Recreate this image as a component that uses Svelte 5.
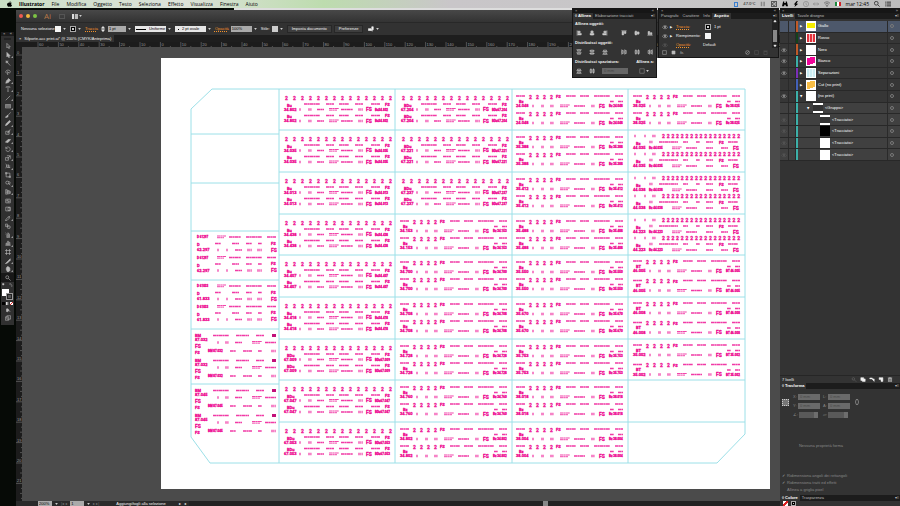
<script lang="ts">
  type Label = { x: number; y: number; t: string; size: number };
  type Line = { x1: number; x2: number; y: number; w: number; o: number };

  const menus = ['File', 'Modifica', 'Oggetto', 'Testo', 'Seleziona', 'Effetto', 'Visualizza', 'Finestra', 'Aiuto'];

  // tool glyphs, 16x16 box
  const tools: { name: string; d: string; fill?: boolean; sub?: boolean }[] = [
    { name: 'Selezione', d: 'M5 1v12l3-3 2 5 2-1-2-4h4z' },
    { name: 'Selezione diretta', d: 'M5 1v12l3-3 2 5 2-1-2-4h4z', fill: true, sub: true },
    { name: 'Bacchetta magica', d: 'M7 7l7 8M5 1v8M1 5h8M2 2l6 6M8 2L2 8' },
    { name: 'Lazo', d: 'M6 12C0 10 1 3 8 3s8 6 3 8l-4-4v8l2-2' },
    { name: 'Penna', d: 'M2 14l2-7 6-5 4 4-5 6zM9 1l6 6', fill: true, sub: true },
    { name: 'Testo', d: 'M3 5V2h10v3M8 2v12M6 14h4', sub: true },
    { name: 'Linea', d: 'M2 14L14 2', sub: true },
    { name: 'Rettangolo', d: 'M1 4h14v9H1zM2 7h12M2 10h12', sub: true },
    { name: 'Pennello', d: 'M15 1L7 10M8 9c-3-1-3 3-7 5 4 1 8 0 7-5', fill: true },
    { name: 'Matita', d: 'M1 15l2-5L12 1l3 3-9 9z', fill: true, sub: true },
    { name: 'Pennello blob', d: 'M2 6h9v8H2zM6 10l8-9M13 4l-5 7', sub: true },
    { name: 'Gomma', d: 'M1 11l7-7h7l-7 8z', fill: true, sub: true },
    { name: 'Rotazione', d: 'M3 5a6 6 0 1 1-1 5M2 2v5h5', sub: true },
    { name: 'Scala', d: 'M1 7h8v7H1zM5 2h9v8M14 2L7 9', sub: true },
    { name: 'Larghezza', d: 'M2 2c4 3 2 9 0 12M3 8h11M8 3l3 10M5 12h9', sub: true },
    { name: 'Trasformazione libera', d: 'M3 3h10v10H3zM1 1h4v4H1zM11 11h4v4h-4z' },
    { name: 'Crea forme', d: 'M6 3a4 4 0 1 1 0 8 4 4 0 0 1 0-8M9 8l5 6M9 4c6-1 6 7 1 7', sub: true },
    { name: 'Griglia prospettica', d: 'M2 1v13l12-2V6zM2 5l12 3M2 10h12M7 3v10', sub: true },
    { name: 'Trama', d: 'M2 3h12v10H2zM2 8c4-3 8 3 12 0M8 3c-3 4 3 6 0 10' },
    { name: 'Sfumatura', d: 'M2 3h12v10H2zM8 4h5v8H8z' },
    { name: 'Contagocce', d: 'M1 15l2-4 6-6 3 3-6 6zM9 3l4 4M11 5l3-3', sub: true },
    { name: 'Fusione', d: 'M1 3h6v6H1zM10 7a4 4 0 1 1 0 8 4 4 0 0 1 0-8M5 6l6 6' },
    { name: 'Spruzza simboli', d: 'M5 6h7v9H5zM6 3h4v3M1 2h1M3 4h1M1 6h1M7 9h3v3H7z', sub: true },
    { name: 'Grafico', d: 'M1 14h14M3 14V8h2v6M7 14V3h2v11M11 14V6h2v8', sub: true },
    { name: 'Tavola disegno', d: 'M4 0v16M12 0v16M0 4h16M0 12h16' },
    { name: 'Sezione', d: 'M1 15l7-7 6-6v4l-7 7z', fill: true, sub: true },
    { name: 'Mano', d: 'M3 8l2-5 2-2 2 1 2 1 2 3v6l-3 3H6z', fill: true, sub: true },
    { name: 'Zoom', d: 'M6 2a4 4 0 1 1 0 8 4 4 0 0 1 0-8M9 9l6 6' }
  ];

  const layers = [
    { name: 'Giallo', color: '#c05a28', thumb: 'yellow', eye: false, selected: true },
    { name: 'Rosso', color: '#12431b', thumb: 'red', eye: false },
    { name: 'Nero', color: '#c05a28', thumb: 'dots', eye: true },
    { name: 'Bianco', color: '#3cb0a8', thumb: 'magenta', eye: true },
    { name: 'Separazioni', color: '#7a2fb8', thumb: 'cyan', eye: true },
    { name: 'Cut (no print)', color: '#4361b8', thumb: 'orange', eye: false },
    { name: '(no print)', color: '#3cb0a8', thumb: 'white', eye: true, open: true },
    { name: '<Gruppo>', color: '#3cb0a8', thumb: 'band', depth: 1, open: true },
    { name: '<Tracciato>', color: '#3cb0a8', thumb: 'band', depth: 2 },
    { name: '<Tracciato>', color: '#3cb0a8', thumb: 'black', depth: 2 },
    { name: '<Tracciato>', color: '#3cb0a8', thumb: 'white', depth: 2 },
    { name: '<Tracciato>', color: '#3cb0a8', thumb: 'white', depth: 2 }
  ];

  const alignH = ['M3 1v14M5 3h6v4H5zM5 9h9v4H5z', 'M8 1v14M5 3h6v4H5zM3 9h10v4H3z', 'M13 1v14M5 3h6v4H5zM2 9h9v4H2z'];
  const alignV = ['M1 2h14M3 4h4v9H3zM9 4h4v5H9z', 'M1 8h14M3 3h4v10H3zM9 5h4v6H9z', 'M1 14h14M3 4h4v8H3zM9 7h4v5H9z'];
  const distH = ['M1 2h14M4 3h8v3H4zM1 10h14M4 11h8v3H4z', 'M1 5h14M4 3h8v4H4zM1 12h14M4 10h8v4H4z', 'M1 7h14M4 3h8v3H4zM1 14h14M4 10h8v3H4z'];
  const distV = ['M2 1v14M3 4h3v8H3zM10 1v14M11 4h3v8h-3z', 'M5 1v14M3 4h4v8H3zM12 1v14M10 4h4v8h-4z', 'M7 1v14M3 4h3v8H3zM14 1v14M10 4h3v8h-3z'];

  const hTicks = Array.from({ length: 37 }, (_, i) => ({ x: 22 + i * 20.4, n: Math.abs(i - 6) * 10 }));
  const vTicks = Array.from({ length: 22 }, (_, i) => ({ y: 8 + i * 20.4, n: i }));

  const labels: Label[] = [];
  const lines: Line[] = [];
  const boxes: { x: number; y: number }[] = [];

  const put = (x: number, y: number, t: string, size = 4) => labels.push({ x, y: y + size * 0.36, t, size });
  const micro = (y: number, ...spans: number[][]) =>
    spans.forEach(([a, b]) => lines.push({ x1: a, x2: b, y, w: 1.4, o: 0.8 }));
  const mark = (y: number, ...spans: number[][]) =>
    spans.forEach(([a, b]) => lines.push({ x1: a, x2: b, y, w: 2.6, o: 0.5 }));
  const pair = (x: number, y: number, a: number, b: number) =>
    lines.push({ x1: x + a, x2: x + b, y: y - 1, w: 1.2, o: 0.75 }, { x1: x + a, x2: x + b - 2, y: y + 0.6, w: 1.2, o: 0.6 });
  const shift = (x: number, spans: number[][]) => spans.map(([a, b]) => [a + x, b + x]);

  // fourteen class numerals over two vehicle strips
  function stripLong(x: number, y: number, cls: string, num: string) {
    for (let i = 0; i < 14; i++) put(x + 6 + i * 8, y + 9, '2', 5);
    for (const dy of [0, 11.5]) {
      const t = y + dy;
      micro(t + 15, ...shift(x, [[25, 41], [47, 55], [60, 70], [76, 84], [92, 101]]));
      put(x + 106, t + 15.5, 'FS', 4);
      put(x + 8, t + 16.5, cls, 4);
      put(x + 5, t + 20.5, num, 4);
      mark(t + 20.5, ...shift(x, [[20, 22], [29, 33]]));
      micro(t + 20.5, ...shift(x, [[38, 45], [62, 74]]));
      pair(x, t + 20.5, 50, 60);
      mark(t + 20.5, ...shift(x, [[79, 84]]));
      put(x + 87, t + 20.5, 'FS', 5);
      put(x + 96, t + 20.5, cls + num, 3);
    }
  }

  // four numerals plus FS on the top line
  function stripShort(x: number, y: number, cls: string, num: string, step = 17) {
    for (const dy of [0, step]) {
      const t = y + dy;
      micro(t + 7, ...shift(x, [[5, 14], [55, 65], [69, 78], [83, 99], [104, 112]]));
      for (let i = 0; i < 4; i++) put(x + 18 + i * 7, t + 8, '2', 5);
      put(x + 45, t + 8, 'FS', 4);
      put(x + 8, t + 12.5, cls, 4);
      put(x + 5, t + 17, num, 4);
      micro(t + 12.5, ...shift(x, [[99, 103], [107, 112]]));
      mark(t + 17, ...shift(x, [[21, 23], [30, 33], [39, 43], [80, 84]]));
      pair(x, t + 17, 49, 59);
      micro(t + 17, ...shift(x, [[63, 74]]));
      put(x + 88, t + 17, 'FS', 5);
      put(x + 98, t + 17, cls + ' ' + num, 3);
    }
  }

  function stripDense(x: number, y: number, cls: string, num: string) {
    for (const dy of [0, 18]) {
      const t = y + dy;
      mark(t + 6, ...shift(x, [[6, 8], [16, 18], [24, 28]]));
      for (let i = 0; i < 17; i++) put(x + 34 + i * 4.7, t + 6, '2', 5);
      micro(t + 12, ...shift(x, [[31, 50], [55, 60], [68, 72], [78, 85], [100, 110]]));
      mark(t + 12, ...shift(x, [[21, 25]]));
      put(x + 91, t + 12.5, 'FS', 4);
      put(x + 8, t + 13.5, cls, 4);
      put(x + 5, t + 18, num, 4);
      put(x + 21, t + 18, cls + ' ' + num, 3);
      pair(x, t + 18, 44, 54);
      micro(t + 18, ...shift(x, [[58, 69], [78, 85], [93, 100]]));
      put(x + 105, t + 18, 'FS', 5);
    }
  }

  function blockD(y: number, top: string, num: string) {
    for (const dy of [0, 20.5]) {
      const t = y + dy;
      put(36, t + 6, 'D ' + top, 3);
      pair(0, t + 6, 56, 65);
      micro(t + 6, [68, 80], [85, 101], [106, 115]);
      micro(t + 12.5, [54, 60], [71, 78], [85, 91], [97, 101]);
      put(110, t + 12.5, 'FS', 4);
      put(36, t + 14, 'D', 4);
      put(36, t + 19, num, 4);
      mark(t + 19, [56, 58], [65, 67], [86, 91], [96, 101]);
      micro(t + 19, [74, 81]);
      put(110, t + 19, 'FS', 5);
    }
  }

  function blockBM(y: number, num: string) {
    for (const dy of [0, 25]) {
      const t = y + dy;
      put(34, t + 6.5, 'BM', 4);
      micro(t + 6.5, [52, 68], [75, 88], [95, 103]);
      boxes.push({ x: 111, y: t + 5 });
      put(34, t + 11, num, 4);
      mark(t + 13.5, [56, 58], [64, 68]);
      micro(t + 13.5, [74, 81], [104, 115]);
      pair(0, t + 13.5, 91, 101);
      put(34, t + 17.5, 'FS', 5);
      put(34, t + 23.5, 'FS', 4);
      put(47, t + 22, 'BM ' + num, 3);
      micro(t + 22, [69, 75], [82, 91], [97, 101]);
      mark(t + 22, [110, 115]);
    }
  }

  const rowTop = [31, 72, 114, 156, 197, 239, 281, 322, 364];

  ['34.802', '34.035', '34.013', '34.438', '34.407', '34.418'].forEach((n, i) => stripLong(118, rowTop[i], 'Bu', n));
  ['67.009', '67.047', '67.053'].forEach((n, i) => stripLong(118, rowTop[i + 6], 'BDu', n));
  ['67.204', '67.221', '67.237'].forEach((n, i) => stripLong(235, rowTop[i], 'BDu', n));
  ['34.153', '34.700', '34.708', '34.728', '34.760', '34.802'].forEach((n, i) => stripShort(234, rowTop[i + 3], 'Bz', n));
  ['24.048', '35.388', '35.412', '35.488', '35.550', '35.670', '35.753', '38.018', '38.004'].forEach((n, i) =>
    stripShort(350, rowTop[i], 'Bz', n)
  );
  stripShort(467, rowTop[0], 'Bz', '38.025');
  ['44.035', '44.038', '44.223'].forEach((n, i) => stripDense(467, rowTop[i + 1], 'Bz', n));
  ['46.005', '46.008', '35.002'].forEach((n, i) => stripShort(467, rowTop[i + 4] - 1, 'BT', n, 19.5));
  blockD(173, '61297', '62.297');
  blockD(222, '61833', '61.833');
  blockBM(271, '87.032');
  blockBM(326, '87.045');
</script>

{#snippet glyph(d: string, filled = false)}
  <svg class="glyph" viewBox="0 0 16 16" aria-hidden="true">
    <path {d} fill={filled ? 'currentColor' : 'none'} stroke="currentColor" stroke-width="1.6" />
  </svg>
{/snippet}

{#snippet eyeIcon()}
  <svg class="glyph" viewBox="0 0 16 16" aria-hidden="true">
    <path d="M1 9c3-6 11-6 14 0-3 5-11 5-14 0z" fill="none" stroke="currentColor" stroke-width="1.6" />
    <circle cx="8" cy="8" r="2.6" fill="currentColor" />
  </svg>
{/snippet}

{#snippet caret()}
  <svg class="caret" viewBox="0 0 4 3" aria-hidden="true"><path d="M0 0h4L2 3z" fill="currentColor" /></svg>
{/snippet}

<div class="screen">
  <header class="menubar">
    <svg class="apple" viewBox="0 0 16 18" aria-hidden="true">
      <path d="M11 0c0 2-1 4-3 4 0-2 1-4 3-4zM8 5c2 0 5-2 7 1-3 2-2 6 1 7-1 3-3 5-5 5-1 0-2-1-3-1s-2 1-3 1C2 18 0 13 0 10c0-5 5-6 8-5z" />
    </svg>
    <nav>
      <button class="app-name">Illustrator</button>
      {#each menus as m}
        <button>{m}</button>
      {/each}
    </nav>
    <div class="tray">
      <i class="cpu"></i>
      <span class="temp">47.0°C</span>
      <svg class="tray-icon faint" viewBox="0 0 16 16"><path d="M2 2h4v12H2zM9 2h4v12H9z" /></svg>
      <svg class="tray-icon" viewBox="0 0 16 16"><path d="M1 1h14v14H1zM12 6C10 3 4 4 4 8s6 5 8 2" fill="none" stroke="#222" stroke-width="2" /></svg>
      <svg class="tray-icon" viewBox="0 0 16 16"><path d="M3 1h3v4h4V1h3l3 13h-6v-4H6v4H0z" /></svg>
      <svg class="tray-icon" viewBox="0 0 16 16"><path d="M10 0L2 9h4l-2 7 10-9H9l4-7z" /></svg>
      <svg class="tray-icon faint" viewBox="0 0 16 16"><path d="M8 1a7 7 0 1 1 0 14A7 7 0 0 1 8 1M8 4v5l3 2" fill="none" stroke="#222" stroke-width="2" /></svg>
      <svg class="tray-icon faint" viewBox="0 0 16 16"><path d="M0 8h16M5 4L1 8l4 4M11 4l4 4-4 4" fill="none" stroke="#222" stroke-width="2" /></svg>
      <svg class="tray-icon wifi" viewBox="0 0 16 16"><path d="M0 6c5-5 11-5 16 0M3 9c3-3 7-3 10 0M6 12l2 3 2-3c-1-1-3-1-4 0" fill="none" stroke="#222" stroke-width="2" /></svg>
      <i class="flag"></i>
      <span>mar 12:45</span>
      <svg class="tray-icon" viewBox="0 0 16 16"><path d="M6 1a5 5 0 1 1 0 10A5 5 0 0 1 6 1M10 10l5 5" fill="none" stroke="#222" stroke-width="2" /></svg>
      <svg class="tray-icon" viewBox="0 0 16 16"><path d="M0 3h2M4 3h12M0 8h2M4 8h12M0 13h2M4 13h12" stroke="#222" stroke-width="2.4" /></svg>
    </div>
  </header>

  <div class="desktop">
    <aside class="toolbox">
      <div class="grab"><span>×</span><span>«</span></div>
      <div class="grip"></div>
      <div class="tool-list">
        {#each tools as tool}
          <button class:sub={tool.sub} class:active={tool.name === 'Zoom'} aria-label={tool.name}>
            {@render glyph(tool.d, tool.fill)}
          </button>
        {/each}
      </div>
      <div class="swap">{@render glyph('M2 2h6v6H2z', true)}{@render glyph('M2 4c6-2 10 2 9 9M5 1L2 4l3 3M8 11l3 3 3-3')}</div>
      <div class="fill-stroke"><i class="fill"></i><i class="stroke"></i></div>
      <div class="paint"><i class="solid"></i><i class="grad"></i><i class="none"></i></div>
      <div class="mode">{@render glyph('M4 5a4 4 0 1 1 0 7zM8 7l6 6', true)}</div>
      <div class="mode">{@render glyph('M1 5h9v9H1zM5 2h10v9H5z')}</div>
    </aside>

    <main class="window">
      <div class="titlebar">
        <div class="lights"><i class="close"></i><i class="min"></i><i class="max"></i></div>
        <b class="ai">Ai</b>
        <i class="bridge"></i>
        <button class="arrange" aria-label="Disponi documenti"><i></i>{@render caret()}</button>
      </div>

      <div class="controlbar">
        <span class="sel">Nessuna selezione</span>
        <i class="chip"></i>{@render caret()}
        <i class="chip outline"></i>{@render caret()}
        <a class="link" href="#traccia">Traccia</a>
        <span class="stepper">{@render glyph('M4 6l4-5 4 5zM4 10l4 5 4-5z', true)}</span>
        <select class="field pt" aria-label="Traccia"><option>1 pt</option></select>
        {@render caret()}
        <div class="field profile"><i></i><select aria-label="Profilo"><option>Uniforme</option></select></div>
        {@render caret()}
        <div class="field brush"><i></i><select aria-label="Pennello"><option>2 pt ovale</option></select></div>
        {@render caret()}
        <a class="link" href="#opacita">Opacità</a>
        <input class="field opacity" aria-label="Opacità" value="100%" />
        {@render caret()}
        <span>Stile:</span>
        <i class="chip grey"></i>{@render caret()}
        <button>Imposta documento</button>
        <button>Preferenze</button>
        <span class="select-like">{@render glyph('M1 7h7v5H1zM10 2l4 0v8h-3v4l-3-5h2z', true)}</span>{@render caret()}
      </div>

      <div class="doc-tabs">
        <button><span>×</span> Silporte-acc print.ai* @ 200% (CMYK/Anteprima)</button>
      </div>

      <svg class="ruler-h" aria-hidden="true">
        {#each hTicks as t}
          <path d="M{t.x} 0v6M{t.x + 10} 4v2M{t.x + 5} 5v1M{t.x + 15} 5v1" stroke="#777" stroke-width="0.6" />
          <text x={t.x + 1} y="4">{t.n}</text>
        {/each}
      </svg>

      <div class="stage">
        <svg class="ruler-v" aria-hidden="true">
          {#each vTicks as t}
            <path d="M0 {t.y}h6M4 {t.y + 10}h2M5 {t.y + 5}h1M5 {t.y + 15}h1" stroke="#777" stroke-width="0.6" />
            <text x="1" y={t.y - 1}>{t.n}</text>
          {/each}
        </svg>
        <div class="pasteboard">
          <svg class="artboard" viewBox="0 0 609 431" role="img" aria-label="Tavola disegno">
            <rect width="609" height="431" fill="#fff" />
            <g class="cuts">
              <path d="M30 51L51 31H584V376L556 405H49L30 379z" />
              <path d="M118 31V405M234 31V405M351 31V405M467 31V405" />
              <path d="M30 76H118M30 125H118M30 173H118M30 222H118M30 271H118M30 326H118" />
              {#each rowTop.slice(1) as y}
                <path d="M118 {y}H584" />
              {/each}
            </g>
            {#each lines as l}
              <line x1={l.x1} x2={l.x2} y1={l.y} y2={l.y} stroke-width={l.w} opacity={l.o} />
            {/each}
            {#each boxes as b}
              <rect class="box" x={b.x} y={b.y} width="4" height="3" />
            {/each}
            {#each labels as l}
              <text x={l.x} y={l.y} font-size={l.size}>{l.t}</text>
            {/each}
          </svg>
        </div>
      </div>

      <footer class="status">
        <select class="field zoom" aria-label="Zoom"><option>200%</option></select>
        {@render caret()}
        <span class="nav">|◂ ◂</span>
        <select class="field page" aria-label="Tavola"><option>1</option></select>
        {@render caret()}
        <span class="nav">▸ ▸|</span>
        <span class="hint">Aggiungi/togli alla selezione</span>
        <span>▸</span><span>◂</span>
        <div class="track"><i></i></div>
      </footer>
    </main>

    <aside class="dock">
      <div class="panel-top"><span>×</span><span>»</span></div>
      <div class="tabs">
        <button class="on">Livelli</button><button>Tavole disegno</button><span class="flyout">▾≡</span>
      </div>
      <ul class="layers">
        {#each layers as l}
          <li class:selected={l.selected} class:child={l.depth}>
            <span class="eye" class:dim={l.depth}>{#if l.eye || l.depth === 2}{@render eyeIcon()}{/if}</span>
            <span class="lock"></span>
            <i class="tag" style="background: {l.color}"></i>
            <span class="name depth-{l.depth ?? 0}">
              <span class="arrow">{l.depth === 2 ? '' : l.open ? '▼' : '▶'}</span>
              <i class="thumb {l.thumb}"></i>
              {l.name}
            </span>
            <span class="target"><i></i></span>
          </li>
        {/each}
      </ul>
      <div class="layer-foot">
        <span>7 livelli</span>
        <span class="foot-icons">
          <span class="faint">{@render glyph('M6 2a4 4 0 1 1 0 8 4 4 0 0 1 0-8M9 9l6 6')}</span>
          {@render glyph('M1 2h9v9H1zM6 6h9v8H6z', true)}
          {@render glyph('M1 3h8v3H1zM8 6h7v8z', true)}
          {@render glyph('M2 2h12v12H8V8H2z', true)}
          {@render glyph('M3 5h10v10H3zM1 3h14M6 1h4M6 7v6M10 7v6')}
        </span>
      </div>
      <div class="tabs"><button class="on">◊ Trasforma</button><span class="flyout">▾≡</span></div>
      <div class="transform">
        <div class="numbers">
          <i class="locator"></i>
          <div class="pairs">
            <label>X: <input disabled value="0 mm" /></label>
            <label>L: <input disabled value="0 mm" /></label>
            <label>Y: <input disabled value="0 mm" /></label>
            <label>A: <input disabled value="0 mm" /></label>
            <label>∠: <select disabled><option></option></select></label>
            <label>▱: <select disabled><option></option></select></label>
          </div>
          <span class="chain">{@render glyph('M5 6V4a3 3 0 0 1 6 0v2M5 10v2a3 3 0 0 0 6 0v-2M4 6v4M12 6v4')}</span>
        </div>
        <p>Nessuna proprietà forma</p>
        <div class="checks">
          <label><input type="checkbox" checked disabled /> Ridimensiona angoli dei rettangoli</label>
          <label><input type="checkbox" checked disabled /> Ridimensiona tratti ed effetti</label>
          <label><input type="checkbox" disabled /> Allinea a griglia pixel</label>
        </div>
      </div>
      <div class="tabs"><button class="on">◊ Colore</button><button>Trasparenza</button><span class="flyout">▾≡</span></div>
      <div class="color-row"><i class="none"></i><i class="chip outline"></i></div>
    </aside>

    <section class="floating allinea">
      <div class="panel-top"><span>×</span><span>«</span></div>
      <div class="tabs">
        <button class="on">◊ Allinea</button><button>Elaborazione tracciati</button><span class="flyout">▾≡</span>
      </div>
      <div class="align-body">
        <h4>Allinea oggetti:</h4>
        <div class="icon-row">
          <div>{#each alignH as d}<button aria-label="Allinea">{@render glyph(d, true)}</button>{/each}</div>
          <div>{#each alignV as d}<button aria-label="Allinea">{@render glyph(d, true)}</button>{/each}</div>
        </div>
        <h4>Distribuisci oggetti:</h4>
        <div class="icon-row">
          <div>{#each distH as d}<button aria-label="Distribuisci">{@render glyph(d)}</button>{/each}</div>
          <div>{#each distV as d}<button aria-label="Distribuisci">{@render glyph(d)}</button>{/each}</div>
        </div>
        <h4 class="split"><span>Distribuisci spaziatura:</span><span>Allinea a:</span></h4>
        <div class="icon-row">
          <div>
            <button aria-label="Spazio verticale">{@render glyph(distH[2])}</button>
            <button aria-label="Spazio orizzontale">{@render glyph(distV[1])}</button>
            <input class="space" disabled value="0 mm" aria-label="Spaziatura" />
          </div>
          <button class="align-to" aria-label="Allinea a">{@render glyph('M2 2h12v12H2z')}{@render caret()}</button>
        </div>
      </div>
    </section>

    <section class="floating aspetto">
      <div class="panel-top"><span>×</span><span>«</span></div>
      <div class="tabs">
        <button>Paragrafo</button><button>Carattere</button><button>Info</button><button class="on">Aspetto</button>
        <span class="flyout">▾≡</span>
      </div>
      <div class="aspect-body">
        <div class="attrs">
          <div class="attr">{@render eyeIcon()}<span class="arrow">▶</span><a class="link" href="#traccia">Traccia:</a><i class="chip outline"></i><span class="weight">1 pt</span></div>
          <div class="attr">{@render eyeIcon()}<span class="arrow">▶</span><span>Riempimento:</span><i class="chip"></i></div>
          <div class="attr"><span class="faint">{@render eyeIcon()}</span><span></span><a class="link" href="#opacita">Opacità:</a><span class="val">Default</span></div>
        </div>
        <div class="scroll">{@render glyph('M3 12h10L8 4z', true)}<i></i>{@render glyph('M3 4h10l-5 8z', true)}</div>
      </div>
      <div class="aspect-foot">
        {@render glyph('M2 2h12v12H2z')}{@render glyph('M3 3h10v10H3z', true)}<em>fx.</em>
        <span class="push">{@render glyph('M8 2a6 6 0 1 1 0 12A6 6 0 0 1 8 2M4 12l8-8')}</span>
        <span class="faint">{@render glyph('M2 2h12v12H2z')}</span>
        <span class="faint">{@render glyph('M3 5h10v10H3zM1 3h14')}</span>
      </div>
    </section>
  </div>
</div>

<style>
  :global(body) {
    background: #000;
  }

  .screen {
    display: flex;
    flex-direction: column;
    height: 100vh;
    overflow: hidden;
    font: 4px/6px 'Liberation Sans', Arial, sans-serif;
    color: #f2f2f2;
  }

  .screen :global(*) {
    box-sizing: border-box;
  }

  button,
  input,
  select {
    font: inherit;
    color: inherit;
    background: none;
    border: 0;
    border-radius: 0;
    margin: 0;
    padding: 0;
    appearance: none;
    min-width: 0;
  }

  button {
    display: flex;
    align-items: center;
    justify-content: center;
  }

  i {
    display: block;
    flex: none;
  }

  .glyph {
    width: 6px;
    height: 6px;
    flex: none;
    display: block;
  }

  .caret {
    width: 3px;
    height: 2px;
    flex: none;
    color: #ccc;
  }

  .faint {
    opacity: 0.3;
  }

  .link {
    color: #f7932a;
    text-decoration: underline dotted;
  }

  /* menu bar */
  .menubar {
    display: flex;
    align-items: center;
    height: 8px;
    flex: none;
    padding: 0 9px 0 7px;
    font: 5px/8px 'Open Sans', sans-serif;
    color: #000;
    background: linear-gradient(90deg, #c9dfc5, #dde2da 20%, #bddcae 36%, #c9c6c9 50%, #c6c6c6 80%, #bbb);
  }

  .apple {
    width: 5px;
    height: 6px;
    margin-right: 7px;
  }

  .menubar nav {
    display: flex;
    gap: 7px;
  }

  .menubar .app-name {
    font-weight: 700;
  }

  .tray {
    display: flex;
    align-items: center;
    gap: 5px;
    margin-left: auto;
  }

  .tray-icon {
    width: 6px;
    height: 6px;
  }

  .tray .faint {
    margin-left: -1px;
  }

  .wifi {
    opacity: 0.6;
  }

  .cpu {
    width: 4px;
    height: 5px;
    border: 1px solid #3a7fd0;
  }

  .temp {
    font-size: 4px;
  }

  .flag {
    width: 6px;
    height: 4px;
    background: linear-gradient(90deg, #1d8a3c 33%, #fff 33% 66%, #d2232a 66%);
  }

  .desktop {
    position: relative;
    display: flex;
    flex: 1;
    min-height: 0;
    background: linear-gradient(90deg, #060a06 26%, #ddd 26%);
  }

  /* tools */
  .toolbox {
    align-self: flex-start;
    width: 13px;
    flex: none;
    margin: 24px 2px 0 1px;
    background: #303030;
    color: #bbb;
    padding-bottom: 3px;
  }

  .grab {
    display: flex;
    justify-content: space-between;
    padding: 0 2px;
    height: 4px;
    line-height: 4px;
    background: #1a1a1a;
  }

  .grip {
    height: 2px;
    margin: 2px 3px;
    background: #222;
  }

  .tool-list {
    display: grid;
    grid-auto-rows: 1fr;
    height: 240px;
  }

  .tool-list button {
    position: relative;
  }

  .tool-list .sub::after {
    content: '';
    position: absolute;
    right: 1px;
    bottom: 1px;
    border: 1px solid transparent;
    border-right-color: #999;
    border-bottom-color: #999;
  }

  .tool-list .active {
    background: #181818;
  }

  .swap {
    display: flex;
    justify-content: space-between;
    padding: 1px;
  }

  .swap .glyph {
    width: 4px;
    height: 4px;
  }

  .fill-stroke {
    display: grid;
    padding: 1px;
    height: 13px;
  }

  .fill-stroke i {
    grid-area: 1 / 1;
    width: 7px;
    height: 7px;
  }

  .fill-stroke .fill {
    background: #fff;
  }

  .fill-stroke .stroke {
    justify-self: end;
    align-self: end;
    border: 2px solid #222;
    outline: 1px solid #999;
    outline-offset: -1px;
    background: #555;
  }

  .paint {
    display: flex;
    gap: 1px;
    padding: 1px;
  }

  .paint i {
    width: 3px;
    height: 3px;
  }

  .solid {
    background: #000;
  }

  .grad {
    background: linear-gradient(90deg, #fff, #333);
  }

  .none {
    background: linear-gradient(135deg, #fff 35%, #d22 35% 65%, #fff 65%);
  }

  .mode {
    display: flex;
    justify-content: center;
    padding: 1px 0;
  }

  /* document window */
  .window {
    display: flex;
    flex-direction: column;
    flex: 1;
    min-width: 0;
    margin-top: 2px;
    background: #323232;
  }

  .titlebar {
    display: flex;
    align-items: center;
    height: 12px;
    flex: none;
    padding: 0 3px;
    background: linear-gradient(#484848, #333);
  }

  .lights {
    display: flex;
    gap: 3px;
    margin-right: 7px;
  }

  .lights i {
    width: 4px;
    height: 4px;
    border-radius: 50%;
  }

  .close {
    background: #ee5a50;
  }

  .min {
    background: #f0b73c;
  }

  .max {
    background: #7cc344;
  }

  .ai {
    font: 8px/10px 'Open Sans', sans-serif;
    color: #b87848;
    margin-right: 8px;
  }

  .bridge {
    width: 6px;
    height: 5px;
    border: 1px solid #555;
    margin-right: 7px;
  }

  .arrange {
    gap: 1px;
  }

  .arrange i {
    width: 6px;
    height: 5px;
    background: linear-gradient(90deg, #ddd 2px, #555 2px 3px, #bbb 3px);
  }

  .controlbar {
    display: flex;
    align-items: center;
    gap: 2px;
    height: 13px;
    flex: none;
    padding-left: 5px;
    border-top: 1px solid #282828;
    white-space: nowrap;
  }

  .controlbar .caret {
    margin-right: 2px;
  }

  .sel {
    width: 32px;
  }

  .chip {
    width: 6px;
    height: 6px;
    background: #f5f5f5;
  }

  .chip.outline {
    border: 2px solid #000;
    outline: 1px solid #aaa;
    outline-offset: -1px;
    background: #ccc;
  }

  .chip.grey {
    background: #ccc;
  }

  .field {
    height: 6px;
    line-height: 6px;
    background: #aaa;
    color: #000;
    padding-left: 1px;
  }

  .pt {
    width: 18px;
  }

  .profile,
  .brush {
    display: flex;
    align-items: center;
    gap: 3px;
    width: 31px;
    background: #e6e6e6;
  }

  .profile i {
    width: 10px;
    height: 1px;
    background: #000;
  }

  .brush {
    padding-left: 3px;
  }

  .brush i {
    width: 1px;
    height: 1px;
    background: #000;
  }

  .opacity {
    width: 21px;
  }

  .controlbar button {
    height: 8px;
    padding: 0 4px;
    border: 1px solid #272727;
    background: #3e3e3e;
  }

  .select-like {
    margin-left: 3px;
  }

  .doc-tabs {
    height: 7px;
    flex: none;
    background: #1e1e1e;
  }

  .doc-tabs button {
    height: 7px;
    gap: 3px;
    padding: 0 3px;
    background: #323232;
  }

  .ruler-h,
  .ruler-v {
    display: block;
    flex: none;
    background: #1c1c1c;
    font-size: 4px;
  }

  .ruler-h {
    width: 100%;
    height: 5px;
  }

  .ruler-v {
    width: 6px;
    height: 100%;
  }

  .ruler-h text,
  .ruler-v text {
    fill: #999;
  }

  .stage {
    display: flex;
    flex: 1;
    min-height: 0;
  }

  .pasteboard {
    flex: 1;
    min-width: 0;
    padding: 11px 10px 12px 139px;
    background: #4b4b4b;
    overflow: hidden;
  }

  .artboard {
    display: block;
    width: 100%;
  }

  .artboard text {
    font-family: Roboto, sans-serif;
    font-weight: 700;
    fill: #ee0a90;
    stroke: #ee0a90;
    stroke-width: 0.3;
  }

  .artboard line {
    stroke: #ee0a90;
    stroke-dasharray: 3.4 0.3 1.8 0.3;
  }

  .cuts path {
    fill: none;
    stroke: #9ce0e8;
    stroke-width: 1;
  }

  .box {
    fill: #c2107a;
  }

  .status {
    display: flex;
    align-items: center;
    gap: 3px;
    height: 5px;
    flex: none;
    padding-left: 22px;
    line-height: 5px;
    background: #2a2a2a;
    white-space: nowrap;
  }

  .status .field {
    height: 5px;
    line-height: 5px;
  }

  .zoom,
  .page {
    width: 14px;
  }

  .nav {
    color: #777;
  }

  .hint {
    margin: 0 10px 0 14px;
  }

  .track {
    flex: 1;
    height: 5px;
    background: #222;
  }

  .track i {
    width: 5px;
    height: 5px;
    margin-left: 60%;
    background: #888;
  }

  /* panels */
  .panel-top {
    display: flex;
    justify-content: space-between;
    height: 5px;
    flex: none;
    line-height: 5px;
    padding: 0 2px;
    background: #161616;
    color: #aaa;
  }

  .tabs {
    display: flex;
    height: 6px;
    flex: none;
    background: #1c1c1c;
    color: #bbb;
    white-space: nowrap;
  }

  .tabs button {
    padding: 0 2px;
  }

  .tabs .on {
    background: #333;
    color: #fff;
    font-weight: 700;
  }

  .flyout {
    margin-left: auto;
    padding-right: 1px;
  }

  .dock {
    display: flex;
    flex-direction: column;
    width: 120px;
    flex: none;
    background: #333;
  }

  .dock > .panel-top + .tabs {
    margin-bottom: 2px;
  }

  .layers {
    display: grid;
    grid-auto-rows: 1fr;
    height: 140px;
    flex: none;
    margin: 0 0 auto;
    padding: 0;
    list-style: none;
  }

  .layers li {
    display: flex;
    align-items: stretch;
    border-bottom: 1px solid #282828;
    background: #363636;
  }

  .layers .child {
    background: #404040;
  }

  .layers .selected {
    background: #4d586b;
  }

  .eye,
  .lock {
    display: flex;
    align-items: center;
    justify-content: center;
    border-right: 1px solid #2a2a2a;
    color: #999;
  }

  .eye {
    width: 9px;
  }

  .eye.dim {
    color: #585858;
  }

  .lock {
    width: 7px;
  }

  .tag {
    width: 2px;
  }

  .name {
    display: flex;
    align-items: center;
    gap: 2px;
    flex: 1;
    padding-left: 2px;
    color: #fff;
  }

  .depth-1 {
    padding-left: 9px;
  }

  .depth-2 {
    padding-left: 16px;
  }

  .arrow {
    width: 4px;
    font-size: 3px;
    font-family: 'DejaVu Sans', sans-serif;
  }

  .thumb {
    width: 10px;
    height: 10px;
    background: #fff;
    border: 1px solid #fff;
  }

  .yellow {
    background: linear-gradient(#fff 15%, #f7ee00 15% 80%, #fff 80%);
  }

  .red {
    background: repeating-linear-gradient(90deg, #e3333d 0 2px, #f6bcc0 2px 3px);
  }

  .dots {
    background: radial-gradient(#ddd 8%, #fff 10%);
  }

  .magenta {
    background: linear-gradient(160deg, #fff 14%, #f0059a 14% 80%, #fff 80%);
  }

  .cyan {
    background: repeating-linear-gradient(90deg, #c9ecf2 0 2px, #e6f6f9 2px 3px);
  }

  .orange {
    background: linear-gradient(160deg, #fff 14%, #f8bd45 14% 80%, #fff 80%);
  }

  .band {
    background: #333;
    border-width: 2px 0;
  }

  .black {
    background: #000;
    border-color: #000;
  }

  .target {
    display: flex;
    align-items: center;
    width: 13px;
    padding-left: 2px;
    border-left: 1px solid #2a2a2a;
  }

  .target i {
    width: 4px;
    height: 4px;
    border: 1px solid #7a7a7a;
    border-radius: 50%;
  }

  .layer-foot {
    display: flex;
    justify-content: space-between;
    align-items: center;
    height: 8px;
    flex: none;
    padding: 0 7px 0 2px;
    border-top: 1px solid #262626;
  }

  .foot-icons {
    display: flex;
    gap: 3px;
  }

  .foot-icons .glyph {
    width: 6px;
    height: 5px;
  }

  .transform {
    flex: none;
    color: #888;
  }

  .numbers {
    display: flex;
    gap: 4px;
    padding: 5px 2px 0;
  }

  .locator {
    width: 7px;
    height: 7px;
    margin-top: 5px;
    background: #777;
    border: 1px dotted #ccc;
  }

  .pairs {
    display: grid;
    grid-template-columns: 27px 27px;
    gap: 3px;
  }

  .pairs label {
    display: flex;
    gap: 1px;
    justify-content: space-between;
  }

  .pairs input,
  .pairs select {
    width: 22px;
    height: 6px;
    padding-left: 2px;
    background: #6a6a6a;
    color: #484848;
  }

  .pairs select {
    width: 20px;
    margin-right: 2px;
    border-right: 4px solid #888;
  }

  .chain {
    color: #bbb;
    margin-top: 5px;
  }

  .transform p {
    margin: 25px 0 23px;
    padding-right: 38px;
    text-align: center;
  }

  .checks {
    display: grid;
    padding: 0 2px 2px;
  }

  .checks label {
    display: flex;
    align-items: center;
    gap: 1px;
    height: 7px;
  }

  .checks input {
    width: 4px;
    height: 6px;
    color: #bbb;
  }

  .checks input:checked::before {
    content: '✓';
    display: block;
  }

  .color-row {
    display: flex;
    align-items: center;
    gap: 3px;
    height: 5px;
    flex: none;
    padding-left: 3px;
    overflow: hidden;
  }

  .color-row i {
    width: 5px;
    height: 5px;
  }

  .floating {
    position: absolute;
    top: 0;
    background: #333;
    border: 1px solid #161616;
    border-top: 0;
  }

  .allinea {
    right: 243px;
    width: 85px;
  }

  .aspetto {
    right: 121px;
    width: 121px;
  }

  .align-body {
    display: grid;
    padding: 1px 2px 0;
  }

  h4 {
    margin: 0;
    font-size: 4px;
    font-weight: 700;
    line-height: 8px;
  }

  .split {
    display: flex;
    justify-content: space-between;
  }

  .icon-row {
    display: flex;
    justify-content: space-between;
    align-items: center;
    height: 11px;
    padding-bottom: 2px;
    color: #ccc;
  }

  .icon-row div {
    display: flex;
    align-items: center;
    gap: 7px;
    padding: 0 1px;
  }

  .space {
    width: 26px;
    height: 6px;
    padding-left: 2px;
    background: #666;
    color: #444;
  }

  .align-to {
    gap: 1px;
    padding-right: 5px;
    color: #888;
  }

  .aspect-body {
    display: flex;
    height: 29px;
  }

  .attrs {
    flex: 1;
    padding-top: 3px;
  }

  .attr {
    display: grid;
    grid-template-columns: 8px 6px 27px 9px 20px;
    align-items: center;
    height: 9px;
    padding-left: 3px;
    white-space: nowrap;
  }

  .attr .glyph {
    color: #aaa;
  }

  .attr .chip {
    justify-self: center;
  }

  .weight {
    padding-left: 2px;
  }

  .scroll {
    display: flex;
    flex-direction: column;
    justify-content: space-between;
    align-items: center;
    width: 6px;
    background: #222;
  }

  .scroll .glyph {
    width: 4px;
    height: 4px;
  }

  .scroll i {
    width: 4px;
    height: 12px;
    margin-top: 5px;
    background: #888;
  }

  .aspect-foot {
    display: flex;
    align-items: center;
    gap: 4px;
    height: 9px;
    padding: 0 10px 0 3px;
    color: #bbb;
  }

  .aspect-foot .glyph {
    width: 5px;
    height: 5px;
  }

  .push {
    margin-left: auto;
  }
</style>
